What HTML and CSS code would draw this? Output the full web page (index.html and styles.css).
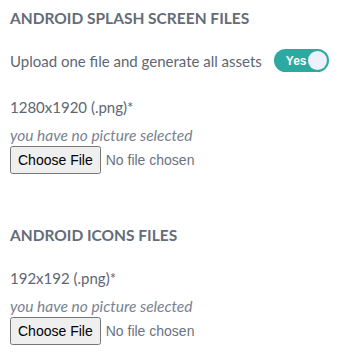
FILE: index.html
```html
<!DOCTYPE html>
<html>
<head>
<meta charset="utf-8">
<link rel="stylesheet" href="styles.css">
</head>
<body>
<div class="page">
  <section class="group">
    <h2 class="title">ANDROID SPLASH SCREEN FILES</h2>
    <div class="option">
      <span class="option-label">Upload one file and generate all assets</span>
      <span class="toggle"><span class="toggle-text">Yes</span><span class="knob"></span></span>
    </div>
    <div class="field">
      <div class="field-label">1280x1920 (.png)*</div>
      <div class="hint">you have no picture selected</div>
      <input class="file" type="file">
    </div>
  </section>
  <section class="group second">
    <h2 class="title">ANDROID ICONS FILES</h2>
    <div class="field">
      <div class="field-label">192x192 (.png)*</div>
      <div class="hint">you have no picture selected</div>
      <input class="file" type="file">
    </div>
  </section>
</div>
</body>
</html>
```
FILE: styles.css
```css
html, body { margin: 0; padding: 0; background: #fff; }
.page {
  padding: 8px 10px;
  font-family: "Lato", "Noto Sans", sans-serif;
  color: #5d6673;
  font-size: 15px;
}
.title {
  margin: 0;
  font-size: 15.5px;
  font-weight: 700;
  color: #646c78;
  line-height: 20px;
}
.option {
  display: flex;
  align-items: center;
  gap: 12px;
  margin-top: 21px;
  height: 23px;
}
.option-label { line-height: 20px; }
.toggle {
  display: inline-flex;
  align-items: center;
  justify-content: space-between;
  width: 55px;
  height: 23px;
  border-radius: 12px;
  background: #2ea9a1;
  box-sizing: border-box;
  padding: 0 2px 0 12px;
}
.toggle-text { color: #fff; font-size: 12px; font-weight: 700; font-family: "Liberation Sans", Arial, sans-serif; }
.knob { width: 19px; height: 19px; border-radius: 50%; background: #eef0fb; }
.field { margin-top: 25px; }
.field-label { line-height: 20px; }
.hint { margin-top: 8px; margin-bottom: 1px; font-style: italic; color: #7a8290; line-height: 20px; font-size: 15.5px; }
.file {
  display: block;
  font-family: "Liberation Sans", Arial, sans-serif;
  font-size: 14px;
  color: #6b7280;
  margin: 0;
}
.file::file-selector-button {
  padding: 4px 6px;
  margin-right: 5px;
}
.second { margin-top: 51px; }
.second .field { margin-top: 23px; }
```
